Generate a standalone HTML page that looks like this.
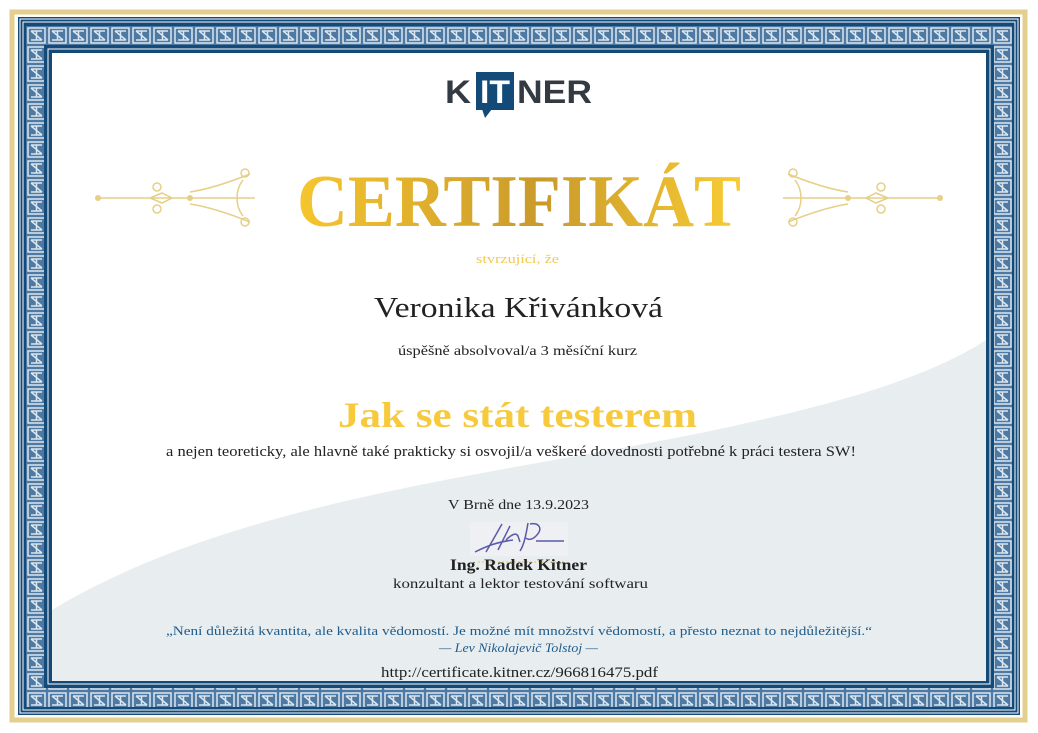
<!DOCTYPE html>
<html><head><meta charset="utf-8">
<style>
html,body{margin:0;padding:0;background:#fff;}
body{width:1038px;height:733px;position:relative;overflow:hidden;}
</style></head><body>
<svg width="1038" height="733" style="position:absolute;left:0;top:0" font-family="Liberation Serif,serif">
<defs>
<pattern id="pt" x="26" y="26" width="21" height="19" patternUnits="userSpaceOnUse">
<rect width="21" height="19" fill="#4d79a3"/>
<path d="M2 2h17v15h-17z M5 5h11 M5 14h11 M10.5 5v9 M5 5l11 9" fill="none" stroke="#dbe6ef" stroke-width="1.5"/>
</pattern>
<linearGradient id="g" x1="0" x2="1"><stop offset="0" stop-color="#f6c62f"/><stop offset=".55" stop-color="#c99a2a"/><stop offset="1" stop-color="#f8cc35"/></linearGradient>
</defs>
<rect x="12" y="12" width="1013" height="708" fill="#fff" stroke="#e3cf8f" stroke-width="5"/>
<rect x="18" y="17" width="1002" height="698" fill="#134a78"/>
<rect x="20" y="19" width="998" height="694" fill="none" stroke="#fff" stroke-width="1"/>
<rect x="23" y="22" width="992" height="688" fill="none" stroke="#fff" stroke-width="1"/>
<rect x="26" y="26" width="986" height="681" fill="url(#pt)"/>
<rect x="44" y="45" width="950" height="643" fill="#134a78"/>
<rect x="48" y="49" width="942" height="635" fill="none" stroke="#fff" stroke-width="1"/>
<rect x="52" y="53" width="934" height="628" fill="#fff"/>
<path d="M52 681 L52 610 C250 490 550 470 760 420 C870 395 940 370 986 340 L986 681 Z" fill="#e8edf0"/>
<g fill="none" stroke="#e6cf86" stroke-width="1.5">
<path d="M98 198 H255 M150 198 l12 -5 l10 5 l-10 5 z M190 192 c20 -3 40 -10 60 -18 M190 204 c20 3 40 10 60 18 M243 180 c-8 10 -8 26 0 36"/>
<circle cx="157" cy="187" r="4"/><circle cx="157" cy="209" r="4"/><circle cx="245" cy="173" r="4"/><circle cx="245" cy="222" r="4"/>
<path d="M940 198 H783 M888 198 l-12 -5 l-10 5 l10 5 z M848 192 c-20 -3 -40 -10 -60 -18 M848 204 c-20 3 -40 10 -60 18 M795 180 c8 10 8 26 0 36"/>
<circle cx="881" cy="187" r="4"/><circle cx="881" cy="209" r="4"/><circle cx="793" cy="173" r="4"/><circle cx="793" cy="222" r="4"/>
</g>
<circle cx="98" cy="198" r="3" fill="#e6cf86"/><circle cx="190" cy="198" r="3" fill="#e6cf86"/>
<circle cx="940" cy="198" r="3" fill="#e6cf86"/><circle cx="848" cy="198" r="3" fill="#e6cf86"/>
<rect x="476" y="72" width="38" height="38" fill="#134a78"/>
<path d="M482 109 l3 9 l7 -9z" fill="#134a78"/>
<g font-family="Liberation Sans,sans-serif" font-weight="bold" font-size="32">
<text x="445" y="103" fill="#333a42" textLength="26" lengthAdjust="spacingAndGlyphs">K</text>
<text x="480" y="103" fill="#fff" textLength="30" lengthAdjust="spacingAndGlyphs">IT</text>
<text x="517" y="103" fill="#333a42" textLength="75" lengthAdjust="spacingAndGlyphs">NER</text>
</g>
<text x="519" y="226" text-anchor="middle" font-weight="bold" font-size="74" fill="url(#g)" textLength="444" lengthAdjust="spacingAndGlyphs">CERTIFIKÁT</text>
<text x="476" y="263" font-size="13" fill="#f2c94c" textLength="83" lengthAdjust="spacingAndGlyphs">stvrzující, že</text>
<text x="374" y="317" font-size="28" fill="#222" textLength="289" lengthAdjust="spacingAndGlyphs">Veronika Křivánková</text>
<text x="398" y="355" font-size="14" fill="#222" textLength="239" lengthAdjust="spacingAndGlyphs">úspěšně absolvoval/a 3 měsíční kurz</text>
<text x="338" y="427" font-size="36" font-weight="bold" fill="#f7ca3e" textLength="359" lengthAdjust="spacingAndGlyphs">Jak se stát testerem</text>
<text x="166" y="456" font-size="15" fill="#222" textLength="690" lengthAdjust="spacingAndGlyphs">a nejen teoreticky, ale hlavně také prakticky si osvojil/a veškeré dovednosti potřebné k práci testera SW!</text>
<text x="448" y="509" font-size="14" fill="#222" textLength="141" lengthAdjust="spacingAndGlyphs">V Brně dne 13.9.2023</text>
<rect x="470" y="522" width="98" height="34" fill="#eef0f4"/>
<path d="M475 552 c12 -6 22 -10 38 -12 M502 524 l-16 28 M510 526 l-12 24 M506 540 c5 -5 10 -8 12 -4 l2 6 M528 523 c-2 12 -4 22 -8 28 M530 524 c8 -2 14 4 6 12 c-4 4 -8 4 -10 2 M536 541 h28" stroke="#5a5aa8" stroke-width="1.5" fill="none"/>
<line x1="478" y1="562" x2="566" y2="562" stroke="#e6c55a" stroke-width="1" stroke-dasharray="2 2"/>
<text x="450" y="570" font-size="16" font-weight="bold" fill="#222" textLength="137" lengthAdjust="spacingAndGlyphs">Ing. Radek Kitner</text>
<text x="393" y="588" font-size="14" fill="#222" textLength="255" lengthAdjust="spacingAndGlyphs">konzultant a lektor testování softwaru</text>
<text x="166" y="635" font-size="13" fill="#1f5b8a" textLength="706" lengthAdjust="spacingAndGlyphs">„Není důležitá kvantita, ale kvalita vědomostí. Je možné mít množství vědomostí, a přesto neznat to nejdůležitější.“</text>
<text x="439" y="652" font-size="13" font-style="italic" fill="#1f5b8a" textLength="159" lengthAdjust="spacingAndGlyphs">— Lev Nikolajevič Tolstoj —</text>
<text x="381" y="677" font-size="15" fill="#222" textLength="277" lengthAdjust="spacingAndGlyphs">http://certificate.kitner.cz/966816475.pdf</text>
</svg>
</body></html>
